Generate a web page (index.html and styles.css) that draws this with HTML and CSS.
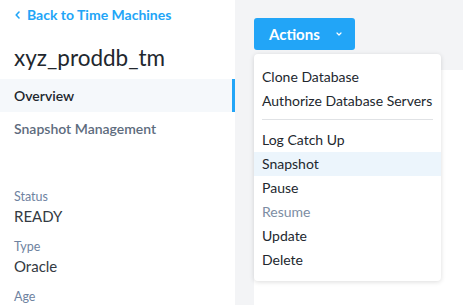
FILE: index.html
```html
<!DOCTYPE html>
<html>
<head>
<meta charset="utf-8">
<link rel="stylesheet" href="styles.css">
</head>
<body>
<div class="app">
  <aside class="sidebar">
    <a class="back" href="#"><svg class="chev" width="5" height="8" viewBox="0 0 5 8"><path d="M4 1L1.2 4 4 7" fill="none" stroke="#22a5f7" stroke-width="1.6" stroke-linecap="round" stroke-linejoin="round"/></svg>Back to Time Machines</a>
    <h1 class="title">xyz_proddb_tm</h1>
    <nav class="nav">
      <div class="nav-item active">Overview</div>
      <div class="nav-item">Snapshot Management</div>
    </nav>
    <dl class="props">
      <dt>Status</dt>
      <dd>READY</dd>
      <dt>Type</dt>
      <dd>Oracle</dd>
      <dt>Age</dt>
    </dl>
  </aside>
  <main class="main">
    <div class="actions">
      <button class="btn"><span class="btn-label">Actions</span>
        <svg class="caret" width="6" height="4" viewBox="0 0 6 4"><path d="M1 1l2 2 2-2" fill="none" stroke="#fff" stroke-width="1.2" stroke-linecap="round" stroke-linejoin="round"/></svg>
      </button>
      <ul class="menu">
        <li class="item">Clone Database</li>
        <li class="item">Authorize Database Servers</li>
        <li class="sep"></li>
        <li class="item">Log Catch Up</li>
        <li class="item hover">Snapshot</li>
        <li class="item">Pause</li>
        <li class="item disabled">Resume</li>
        <li class="item">Update</li>
        <li class="item">Delete</li>
      </ul>
    </div>
    <div class="panel"></div>
  </main>
</div>
</body>
</html>
```

FILE: styles.css
```css
* { box-sizing: border-box; }
html, body { margin: 0; padding: 0; }
body {
  font-family: Lato, "Liberation Sans", sans-serif;
  color: #22272e;
  width: 463px;
  height: 305px;
  overflow: hidden;
}
.app {
  display: flex;
  height: 305px;
}
.sidebar {
  width: 235px;
  flex: none;
  background: #fff;
  padding-top: 6px;
}
.back {
  display: flex;
  align-items: center;
  margin-left: 15px;
  color: #22a5f7;
  text-decoration: none;
  font-size: 14px;
  font-weight: 700;
  line-height: 18px;
}
.chev {
  margin-right: 7px;
}
.title {
  margin: 21px 0 0 14px;
  font-size: 22.5px;
  font-weight: 400;
  line-height: 26px;
  color: #22272e;
}
.nav { margin-top: 8px; }
.nav-item {
  height: 33px;
  line-height: 33px;
  padding-left: 14px;
  font-size: 14px;
  font-weight: 600;
  color: #5d6b7d;
}
.nav-item.active {
  background: #f5f8fb;
  color: #22272e;
  border-right: 3px solid #22a5f7;
}
.props {
  margin: 44px 0 0 14px;
}
.props dt {
  font-size: 12.5px;
  color: #6e82a0;
  line-height: 16px;
}
.props dd {
  margin: 2px 0 14px 0;
  font-size: 15px;
  color: #333a42;
  line-height: 18px;
}
.main {
  flex: 1;
  background: #f3f4f6;
  padding: 18px 0 0 19px;
  display: flex;
  flex-direction: column;
}
.actions {
  position: relative;
  height: 32px;
}
.btn {
  width: 101px;
  height: 32px;
  border: none;
  outline: none;
  border-radius: 3px;
  background: #22a5f7;
  color: #fff;
  font-family: inherit;
  font-size: 15px;
  font-weight: 700;
  padding: 0 0 0 15px;
  display: flex;
  align-items: center;
  margin: 0;
}
.btn-label { width: 67px; text-align: left; }
.caret { margin-top: -1px; }
.panel {
  flex: 1;
  margin-top: 20px;
  background: #fff;
}
.menu {
  position: absolute;
  top: 36px;
  left: 0;
  width: 187px;
  margin: 0;
  padding: 11px 0 9px;
  list-style: none;
  background: #fff;
  border-radius: 4px;
  box-shadow: 0 1px 5px rgba(0,0,0,0.14);
  z-index: 2;
}
.item {
  height: 24px;
  line-height: 24px;
  padding-left: 8px;
  font-size: 14px;
  color: #22272e;
  white-space: nowrap;
}
.item.hover { background: #ecf5fc; }
.item.disabled { color: #7c8da3; }
.sep {
  height: 1px;
  background: #e0e2e5;
  margin: 6px 8px 8px;
}
```
